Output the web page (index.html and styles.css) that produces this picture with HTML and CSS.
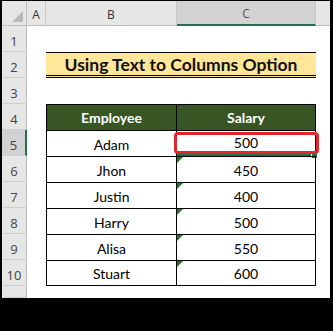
FILE: index.html
```html
<!DOCTYPE html>
<html>
<head>
<meta charset="utf-8">
<link rel="stylesheet" href="styles.css">
</head>
<body>
<div class="sheet">
  <div class="row hdr">
    <div class="corner"></div>
    <div class="ch">A</div>
    <div class="ch">B</div>
    <div class="ch sel">C</div>
    <div class="ch last"></div>
  </div>
  <div class="row"><div class="rh">1</div><div></div><div></div><div></div><div></div></div>
  <div class="row"><div class="rh">2</div><div></div><div class="title">Using Text to Columns Option</div><div></div></div>
  <div class="row"><div class="rh">3</div><div></div><div></div><div></div><div></div></div>
  <div class="row"><div class="rh">4</div><div></div><div class="cell th first top">Employee</div><div class="cell th top">Salary</div><div></div></div>
  <div class="row"><div class="rh rsel">5</div><div></div><div class="cell first">Adam</div><div class="cell active">500</div><div></div></div>
  <div class="row"><div class="rh">6</div><div></div><div class="cell first">Jhon</div><div class="cell err">450</div><div></div></div>
  <div class="row"><div class="rh">7</div><div></div><div class="cell first">Justin</div><div class="cell err">400</div><div></div></div>
  <div class="row"><div class="rh">8</div><div></div><div class="cell first">Harry</div><div class="cell err">500</div><div></div></div>
  <div class="row"><div class="rh">9</div><div></div><div class="cell first">Alisa</div><div class="cell err">550</div><div></div></div>
  <div class="row"><div class="rh">10</div><div></div><div class="cell first">Stuart</div><div class="cell err">600</div><div></div></div>
  <div class="row short"><div class="rh"></div><div></div><div></div><div></div><div></div></div>
</div>
</body>
</html>
```

FILE: styles.css
```css
html, body {
  margin: 0;
  padding: 0;
  background: #000;
  width: 333px;
  height: 331px;
  overflow: hidden;
}
.sheet {
  margin: 1px 3px 0 2px;
  width: 328px;
  height: 297px;
  background: #fff;
  display: flex;
  flex-direction: column;
  font-family: "Lato", "Open Sans", sans-serif;
  color: #000;
}
.row {
  display: grid;
  grid-template-columns: 25px 19px 131px 139px 14px;
  height: 26px;
}
.row.hdr {
  height: 25px;
}
.row.short {
  height: 12px;
}
.corner {
  background: #e6e6e6;
  border-right: 1px solid #bdbdbd;
  border-bottom: 1px solid #bdbdbd;
  position: relative;
}
.corner::after {
  content: "";
  position: absolute;
  right: 3px;
  bottom: 3px;
  width: 0;
  height: 0;
  border-left: 11px solid transparent;
  border-bottom: 11px solid #b9b9b9;
}
.ch {
  background: #e6e6e6;
  border-right: 1px solid #c8c8c8;
  border-bottom: 1px solid #bdbdbd;
  display: flex;
  align-items: center;
  justify-content: center;
  font-family: "Open Sans", "Lato", sans-serif;
  font-size: 12px;
  color: #333;
  padding-top: 2px;
  box-sizing: border-box;
}
.ch.sel {
  background: #d2d2d2;
  color: #555;
  border-bottom: 2px solid #217346;
}
.ch.last {
  border-right: none;
}
.rh {
  background: #e6e6e6;
  border-right: 1px solid #bdbdbd;
  border-bottom: 1px solid #cfcfcf;
  display: flex;
  align-items: flex-end;
  justify-content: center;
  font-family: "Open Sans", "Lato", sans-serif;
  font-size: 13px;
  color: #444;
  padding-bottom: 1px;
  box-sizing: border-box;
}
.rh.rsel {
  background: #d2d2d2;
  border-right: 2px solid #217346;
}
.title {
  grid-column: 3 / 5;
  background: #ffe699;
  border-top: 1px solid #000;
  border-bottom: 3px double #000;
  box-sizing: border-box;
  display: flex;
  align-items: center;
  justify-content: center;
  font-weight: bold;
  font-size: 17.5px;
  color: #111;
  padding-top: 1px;
}
.cell {
  border-top: 1px solid #000;
  border-right: 1px solid #000;
  box-sizing: border-box;
  display: flex;
  align-items: flex-end;
  justify-content: center;
  font-size: 14px;
  padding-bottom: 3px;
  position: relative;
}
.cell.first {
  border-left: 1px solid #000;
}
.row:nth-child(11) .cell {
  border-bottom: 1px solid #000;
}
.cell.th {
  background: #375623;
  color: #fff;
  font-weight: bold;
  align-items: center;
  padding-bottom: 0;
}
.cell.err::before {
  content: "";
  position: absolute;
  left: 0;
  top: 0;
  width: 0;
  height: 0;
  border-top: 6px solid #1e7b1e;
  border-right: 6px solid transparent;
}
.cell.active {
  border-bottom: 2px solid #217346;
}
.cell.active::before {
  content: "";
  position: absolute;
  right: -3px;
  bottom: -5px;
  width: 5px;
  height: 5px;
  background: #217346;
  border: 1px solid #fff;
}
.cell.active::after {
  content: "";
  position: absolute;
  left: -3px;
  right: -4px;
  top: 1px;
  bottom: 0px;
  border: 3px solid #e3262b;
  border-radius: 4px;
}
```
